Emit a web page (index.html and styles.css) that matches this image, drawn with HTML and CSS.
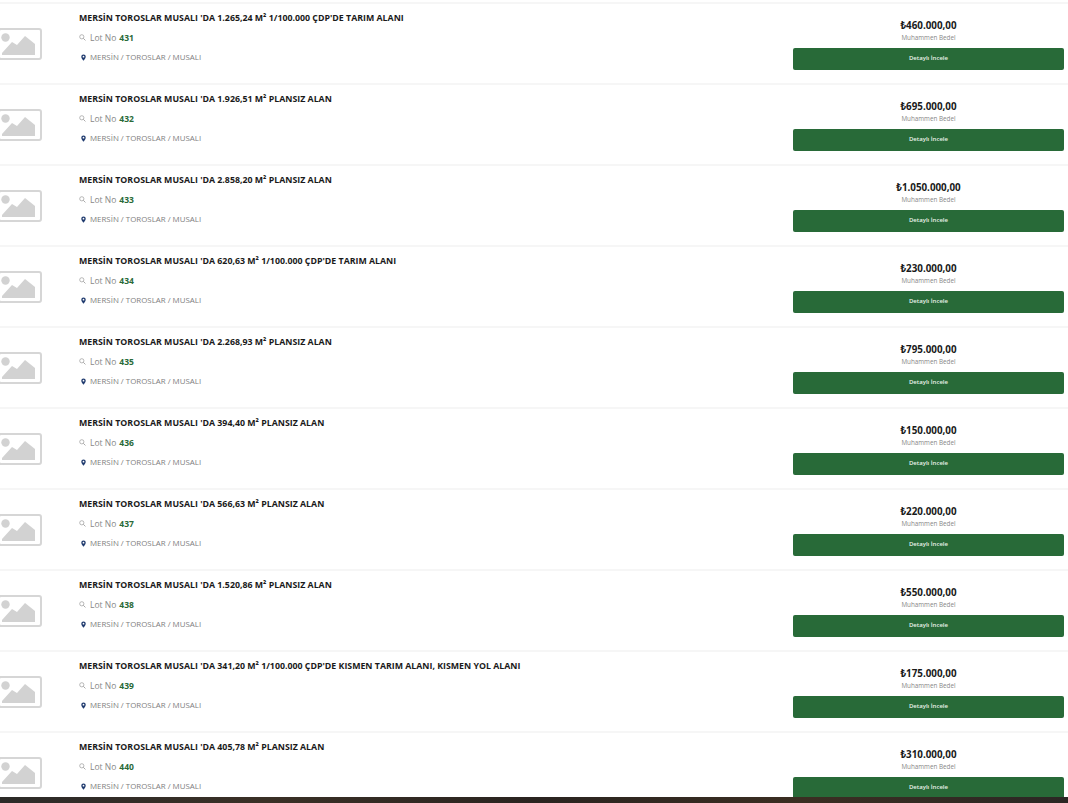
FILE: index.html
```html
<!DOCTYPE html>
<html lang="tr">
<head>
    <meta charset="UTF-8">
    <meta name="viewport" content="width=device-width, initial-scale=1.0">
    <title>Mersin Toroslar Musalı</title>
    <link rel="stylesheet" href="styles.css">
</head>
<body>
    <svg class="defs" width="0" height="0">
        <symbol id="noimg" viewBox="0 0 43 32">
            <rect x="-1" y="1" width="42" height="30" rx="2" fill="none" stroke="#d6d6d6" stroke-width="2"/>
            <circle cx="5.5" cy="9.5" r="4.2" fill="#d2d2d2"/>
            <path d="M2 27v-2l10-11 5 3 8-9 10 8v11z" fill="#d2d2d2"/>
        </symbol>
        <symbol id="search" viewBox="0 0 10 10">
            <circle cx="4" cy="4" r="3" fill="none" stroke="#999" stroke-width="1"/>
            <path d="M6.2 6.2L9.2 9.2" stroke="#999" stroke-width="1.2"/>
        </symbol>
        <symbol id="pin" viewBox="0 0 8 10">
            <path fill-rule="evenodd" d="M4 0a3.6 3.6 0 0 1 3.6 3.6C7.6 6 4 10 4 10S.4 6 .4 3.6A3.6 3.6 0 0 1 4 0zm0 2.3a1.4 1.4 0 1 0 0 2.8 1.4 1.4 0 0 0 0-2.8z" fill="#1f3a6e"/>
        </symbol>
    </svg>

    <div class="list">
        <div class="row">
            <svg class="thumb"><use href="#noimg"/></svg>
            <div class="info">
                <h3>MERSİN TOROSLAR MUSALI 'DA 1.265,24 M² 1/100.000 ÇDP'DE TARIM ALANI</h3>
                <p class="lot"><svg class="ico-search"><use href="#search"/></svg>Lot No <b>431</b></p>
                <p class="place"><svg class="ico-pin"><use href="#pin"/></svg>MERSİN / TOROSLAR / MUSALI</p>
            </div>
            <div class="price">
                <strong>₺460.000,00</strong>
                <small>Muhammen Bedel</small>
                <a class="btn">Detaylı İncele</a>
            </div>
        </div>
        <div class="row">
            <svg class="thumb"><use href="#noimg"/></svg>
            <div class="info">
                <h3>MERSİN TOROSLAR MUSALI 'DA 1.926,51 M² PLANSIZ ALAN</h3>
                <p class="lot"><svg class="ico-search"><use href="#search"/></svg>Lot No <b>432</b></p>
                <p class="place"><svg class="ico-pin"><use href="#pin"/></svg>MERSİN / TOROSLAR / MUSALI</p>
            </div>
            <div class="price">
                <strong>₺695.000,00</strong>
                <small>Muhammen Bedel</small>
                <a class="btn">Detaylı İncele</a>
            </div>
        </div>
        <div class="row">
            <svg class="thumb"><use href="#noimg"/></svg>
            <div class="info">
                <h3>MERSİN TOROSLAR MUSALI 'DA 2.858,20 M² PLANSIZ ALAN</h3>
                <p class="lot"><svg class="ico-search"><use href="#search"/></svg>Lot No <b>433</b></p>
                <p class="place"><svg class="ico-pin"><use href="#pin"/></svg>MERSİN / TOROSLAR / MUSALI</p>
            </div>
            <div class="price">
                <strong>₺1.050.000,00</strong>
                <small>Muhammen Bedel</small>
                <a class="btn">Detaylı İncele</a>
            </div>
        </div>
        <div class="row">
            <svg class="thumb"><use href="#noimg"/></svg>
            <div class="info">
                <h3>MERSİN TOROSLAR MUSALI 'DA 620,63 M² 1/100.000 ÇDP'DE TARIM ALANI</h3>
                <p class="lot"><svg class="ico-search"><use href="#search"/></svg>Lot No <b>434</b></p>
                <p class="place"><svg class="ico-pin"><use href="#pin"/></svg>MERSİN / TOROSLAR / MUSALI</p>
            </div>
            <div class="price">
                <strong>₺230.000,00</strong>
                <small>Muhammen Bedel</small>
                <a class="btn">Detaylı İncele</a>
            </div>
        </div>
        <div class="row">
            <svg class="thumb"><use href="#noimg"/></svg>
            <div class="info">
                <h3>MERSİN TOROSLAR MUSALI 'DA 2.268,93 M² PLANSIZ ALAN</h3>
                <p class="lot"><svg class="ico-search"><use href="#search"/></svg>Lot No <b>435</b></p>
                <p class="place"><svg class="ico-pin"><use href="#pin"/></svg>MERSİN / TOROSLAR / MUSALI</p>
            </div>
            <div class="price">
                <strong>₺795.000,00</strong>
                <small>Muhammen Bedel</small>
                <a class="btn">Detaylı İncele</a>
            </div>
        </div>
        <div class="row">
            <svg class="thumb"><use href="#noimg"/></svg>
            <div class="info">
                <h3>MERSİN TOROSLAR MUSALI 'DA 394,40 M² PLANSIZ ALAN</h3>
                <p class="lot"><svg class="ico-search"><use href="#search"/></svg>Lot No <b>436</b></p>
                <p class="place"><svg class="ico-pin"><use href="#pin"/></svg>MERSİN / TOROSLAR / MUSALI</p>
            </div>
            <div class="price">
                <strong>₺150.000,00</strong>
                <small>Muhammen Bedel</small>
                <a class="btn">Detaylı İncele</a>
            </div>
        </div>
        <div class="row">
            <svg class="thumb"><use href="#noimg"/></svg>
            <div class="info">
                <h3>MERSİN TOROSLAR MUSALI 'DA 566,63 M² PLANSIZ ALAN</h3>
                <p class="lot"><svg class="ico-search"><use href="#search"/></svg>Lot No <b>437</b></p>
                <p class="place"><svg class="ico-pin"><use href="#pin"/></svg>MERSİN / TOROSLAR / MUSALI</p>
            </div>
            <div class="price">
                <strong>₺220.000,00</strong>
                <small>Muhammen Bedel</small>
                <a class="btn">Detaylı İncele</a>
            </div>
        </div>
        <div class="row">
            <svg class="thumb"><use href="#noimg"/></svg>
            <div class="info">
                <h3>MERSİN TOROSLAR MUSALI 'DA 1.520,86 M² PLANSIZ ALAN</h3>
                <p class="lot"><svg class="ico-search"><use href="#search"/></svg>Lot No <b>438</b></p>
                <p class="place"><svg class="ico-pin"><use href="#pin"/></svg>MERSİN / TOROSLAR / MUSALI</p>
            </div>
            <div class="price">
                <strong>₺550.000,00</strong>
                <small>Muhammen Bedel</small>
                <a class="btn">Detaylı İncele</a>
            </div>
        </div>
        <div class="row">
            <svg class="thumb"><use href="#noimg"/></svg>
            <div class="info">
                <h3>MERSİN TOROSLAR MUSALI 'DA 341,20 M² 1/100.000 ÇDP'DE KISMEN TARIM ALANI, KISMEN YOL ALANI</h3>
                <p class="lot"><svg class="ico-search"><use href="#search"/></svg>Lot No <b>439</b></p>
                <p class="place"><svg class="ico-pin"><use href="#pin"/></svg>MERSİN / TOROSLAR / MUSALI</p>
            </div>
            <div class="price">
                <strong>₺175.000,00</strong>
                <small>Muhammen Bedel</small>
                <a class="btn">Detaylı İncele</a>
            </div>
        </div>
        <div class="row">
            <svg class="thumb"><use href="#noimg"/></svg>
            <div class="info">
                <h3>MERSİN TOROSLAR MUSALI 'DA 405,78 M² PLANSIZ ALAN</h3>
                <p class="lot"><svg class="ico-search"><use href="#search"/></svg>Lot No <b>440</b></p>
                <p class="place"><svg class="ico-pin"><use href="#pin"/></svg>MERSİN / TOROSLAR / MUSALI</p>
            </div>
            <div class="price">
                <strong>₺310.000,00</strong>
                <small>Muhammen Bedel</small>
                <a class="btn">Detaylı İncele</a>
            </div>
        </div>
    </div>

    <div class="footer"></div>
</body>
</html>
```

FILE: styles.css
```css
html, body {
    height: 100%;
}

body {
    margin: 0;
    font-family: "Open Sans", "Noto Sans", sans-serif;
    background-color: #fff;
    overflow: hidden;
    display: flex;
    flex-direction: column;
}

.defs {
    position: absolute;
}

.list {
    flex: 1;
    min-height: 0;
    overflow: hidden;
    padding-top: 2px;
}

.row {
    display: flex;
    height: 79px;
    border-top: 2px solid #f6f6f6;
}

.thumb {
    flex: none;
    width: 43px;
    height: 32px;
    margin: 24px 36px 0 0;
}

.info {
    flex: 1;
    padding-top: 8px;
}

.info h3 {
    margin: 0;
    font-size: 8.8px;
    line-height: 12px;
    font-weight: 700;
    color: #1a1a1a;
}

.lot {
    display: flex;
    align-items: center;
    margin: 7px 0 0;
    height: 12px;
    font-size: 8.5px;
    color: #888;
}

.lot b {
    margin-left: 3px;
    color: #2a6a38;
}

.place {
    display: flex;
    align-items: center;
    margin: 8px 0 0;
    height: 12px;
    font-size: 7.9px;
    color: #808080;
}

.ico-search {
    flex: none;
    width: 7px;
    height: 7px;
    margin-right: 4px;
}

.ico-pin {
    flex: none;
    width: 5px;
    height: 7px;
    margin: 0 4px 0 2px;
}

.price {
    flex: none;
    width: 271px;
    margin-right: 4px;
    padding-top: 15px;
    text-align: center;
}

.price strong {
    display: block;
    font-size: 9.8px;
    line-height: 14px;
    color: #1a1a1a;
}

.price small {
    display: block;
    font-size: 6.3px;
    line-height: 10px;
    color: #888;
}

.btn {
    display: block;
    margin-top: 5px;
    height: 22px;
    line-height: 21px;
    font-size: 6px;
    font-weight: 600;
    color: #eaf3ea;
    background-color: #286a38;
    border-radius: 2px;
}

.footer {
    flex: none;
    height: 6px;
    background-image: linear-gradient(90deg, #2c2a28, #3a3026 25%, #2a2420 50%, #3b2e22 75%, #2b2724);
}
```
